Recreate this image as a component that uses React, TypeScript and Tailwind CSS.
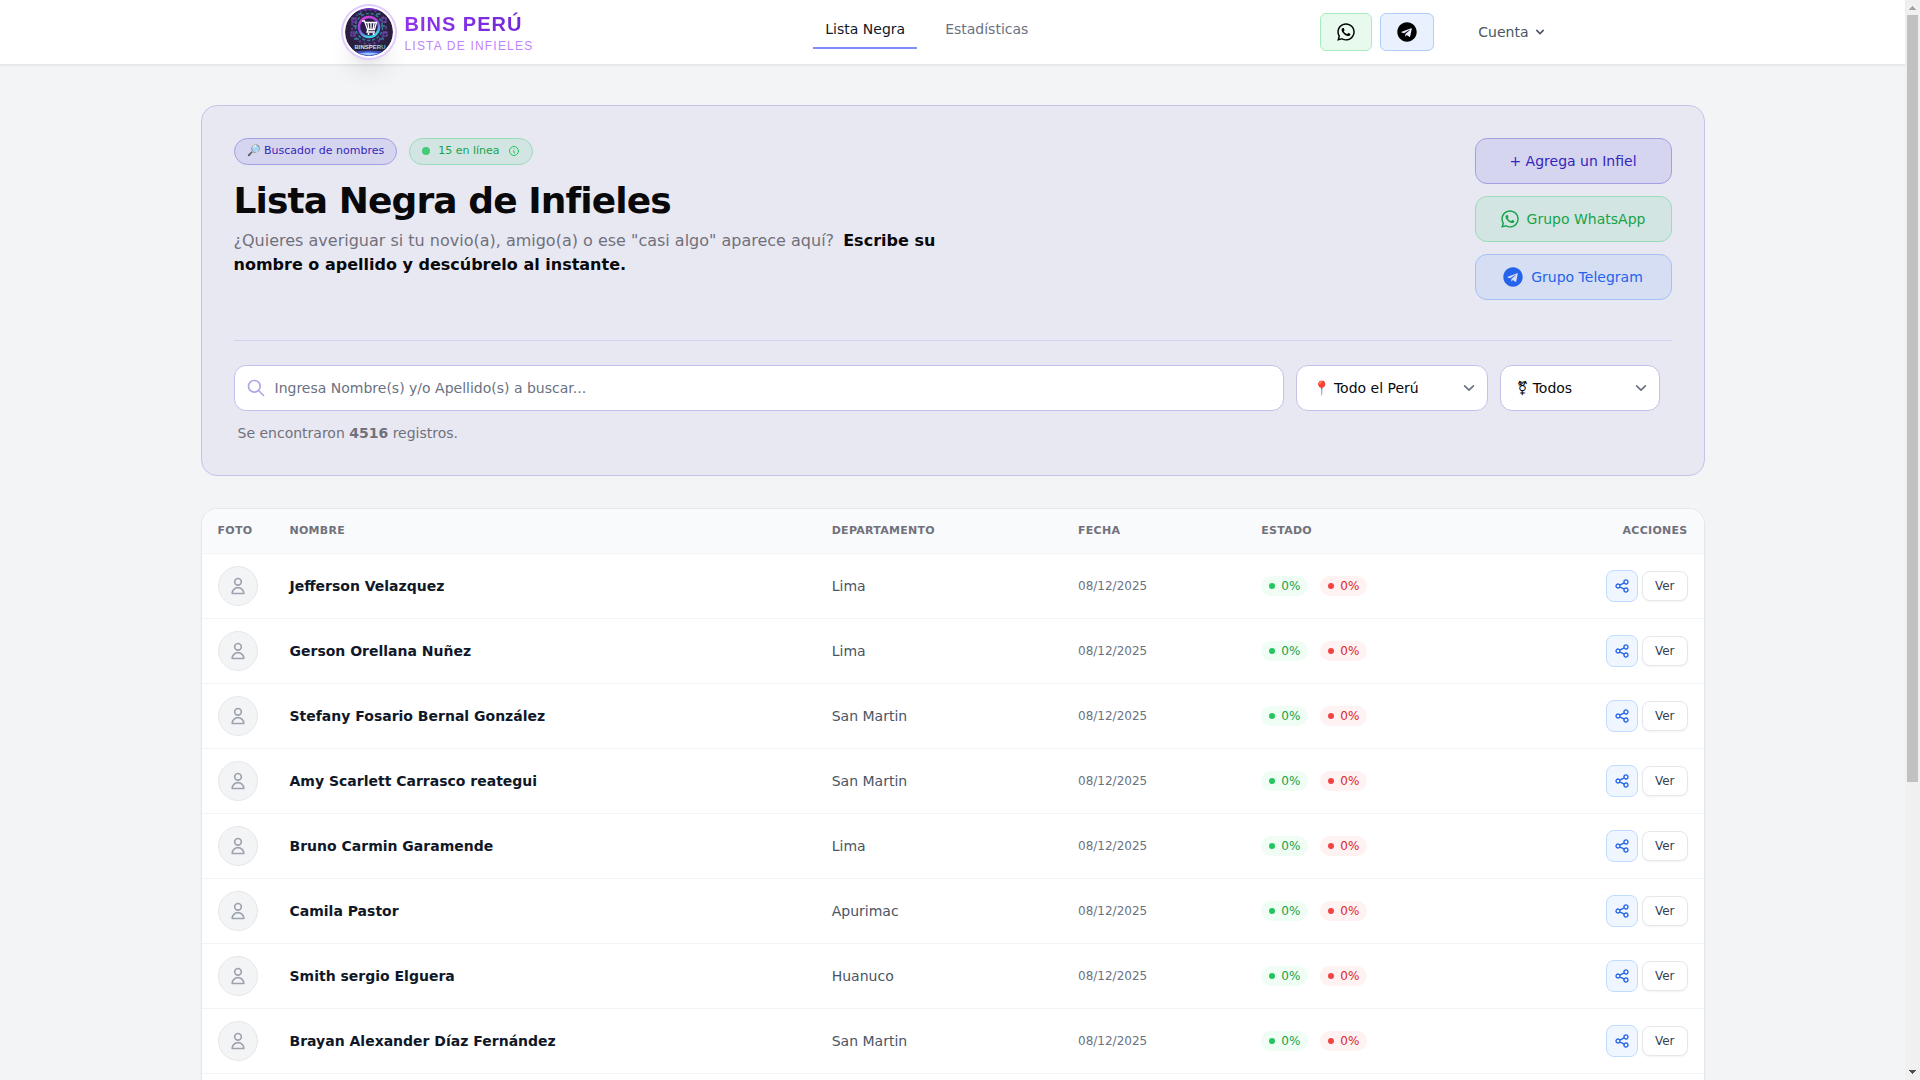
import clsx from "clsx";
import { FaTelegram, FaWhatsapp } from "react-icons/fa";

type Person = {
  name: string;
  department: string;
  date: string;
};

const PEOPLE: Person[] = [
  { name: "Jefferson Velazquez", department: "Lima", date: "08/12/2025" },
  { name: "Gerson Orellana Nuñez", department: "Lima", date: "08/12/2025" },
  { name: "Stefany Fosario Bernal González", department: "San Martin", date: "08/12/2025" },
  { name: "Amy Scarlett Carrasco reategui", department: "San Martin", date: "08/12/2025" },
  { name: "Bruno Carmin Garamende", department: "Lima", date: "08/12/2025" },
  { name: "Camila Pastor", department: "Apurimac", date: "08/12/2025" },
  { name: "Smith sergio Elguera", department: "Huanuco", date: "08/12/2025" },
  { name: "Brayan Alexander Díaz Fernández", department: "San Martin", date: "08/12/2025" },
];

function Logo() {
  return (
    <svg
      viewBox="0 0 48 48"
      className="size-12 rounded-full shadow-xl ring-2 ring-[#e0cbfb] ring-offset-2"
    >
      <defs>
        <radialGradient id="logo-bg" cx="50%" cy="45%" r="55%">
          <stop offset="0" stopColor="#3c2a63" />
          <stop offset="0.7" stopColor="#2b2040" />
          <stop offset="1" stopColor="#2a1d38" />
        </radialGradient>
        <linearGradient id="logo-ring" x1="0" y1="0" x2="0.4" y2="1">
          <stop offset="0" stopColor="#e23fd8" />
          <stop offset="0.55" stopColor="#8a4be0" />
          <stop offset="1" stopColor="#3fd0e6" />
        </linearGradient>
        <linearGradient id="logo-text" x1="0" y1="0" x2="1" y2="0">
          <stop offset="0" stopColor="#7df3e6" />
          <stop offset="0.5" stopColor="#d6f4ff" />
          <stop offset="1" stopColor="#59b4e8" />
        </linearGradient>
        <clipPath id="logo-clip">
          <circle cx="24" cy="24" r="24" />
        </clipPath>
      </defs>
      <g clipPath="url(#logo-clip)">
        <rect width="48" height="48" fill="url(#logo-bg)" />
        <path d="M10 4Q24-5 38 4Q24-1 10 4Z" fill="#7a35dc" />
        <circle cx="24" cy="19" r="17" fill="none" stroke="#5a3f93" strokeWidth="2" strokeDasharray="2 3" />
        <circle cx="24" cy="19" r="13.5" fill="none" stroke="#2d7d94" strokeWidth="1.5" strokeDasharray="3 2" />
        <circle cx="24" cy="19" r="10" fill="#2a1c48" stroke="url(#logo-ring)" strokeWidth="2.5" />
        <g stroke="#7c4cc4" strokeWidth="1" fill="none">
          <rect x="7" y="10" width="4" height="4" />
          <rect x="37" y="10" width="4" height="4" />
          <rect x="6" y="24" width="4" height="4" />
          <rect x="38" y="24" width="4" height="4" />
          <path d="M13 6h4M31 6h4M8 18h4M36 18h4M9 31h5M34 31h5" stroke="#3aa5b8" />
        </g>
        <path
          d="M17 13h2.500l3 8.500h7l2-7H20.500M23 15l.8 6M26 15v6M29 15l-.8 6M23 21.500l-1 2.500h8"
          fill="none"
          stroke="#fff"
          strokeWidth="1.3"
        />
        <circle cx="23.500" cy="26" r="1" fill="#fff" />
        <circle cx="28.500" cy="26" r="1" fill="#fff" />
        <path d="M6 44Q24 41 42 44L36 48H12Z" fill="#3d52c9" />
        <path d="M14 45.500Q24 43.500 34 45.500L24 47.500Z" fill="#9cc5ff" />
        <text
          x="25"
          y="41"
          textAnchor="middle"
          fontSize="6"
          fontWeight="700"
          fontFamily="Liberation Sans, sans-serif"
          fill="url(#logo-text)"
        >
          BINSPERU
        </text>
      </g>
    </svg>
  );
}

function ChevronDown({ className }: { className?: string }) {
  return (
    <svg viewBox="0 0 20 20" fill="none" stroke="currentColor" className={className} aria-hidden>
      <path d="M6 8l4 4 4-4" strokeWidth={1.5} strokeLinecap="round" strokeLinejoin="round" />
    </svg>
  );
}

function Header() {
  return (
    <header className="relative border-b border-gray-200 bg-white shadow-xs">
      <div className="mx-auto flex h-16 max-w-7xl items-center justify-between px-8">
        <a href="#" className="flex items-center gap-3">
          <Logo />
          <span className="flex flex-col pt-1 font-['Liberation_Sans',Arial,sans-serif]">
            <span className="bg-linear-to-r from-[#9333ea] to-[#6d28d9] bg-clip-text text-xl leading-6 font-bold tracking-wider text-transparent">
              BINS PERÚ
            </span>
            <span className="text-xs leading-5 tracking-widest text-[#c084fc]">LISTA DE INFIELES</span>
          </span>
        </a>

        <nav className="flex h-16 items-start gap-4 pt-2 text-sm">
          <a href="#" className="border-b-2 border-[#818cf8] px-3 pt-[11px] pb-2 text-gray-900">
            Lista Negra
          </a>
          <a href="#" className="px-3 pt-[11px] pb-2 text-gray-500">
            Estadísticas
          </a>
        </nav>

        <div className="flex items-center gap-8">
          <div className="flex gap-2">
            <a
              href="#"
              aria-label="WhatsApp"
              className="rounded-md border border-[#a9ebc1] bg-[#e8faee] px-4 py-2 text-black"
            >
              <FaWhatsapp className="h-5 w-[18px]" />
            </a>
            <a
              href="#"
              aria-label="Telegram"
              className="rounded-md border border-[#b0cdfb] bg-[#e9f0fe] px-4 py-2 text-black"
            >
              <FaTelegram className="size-5" />
            </a>
          </div>
          <button type="button" className="flex items-center gap-1 px-3 text-sm text-gray-600">
            Cuenta
            <svg viewBox="0 0 20 20" fill="currentColor" className="size-4" aria-hidden>
              <path
                fillRule="evenodd"
                clipRule="evenodd"
                d="M5.293 7.293a1 1 0 011.414 0L10 10.586l3.293-3.293a1 1 0 111.414 1.414l-4 4a1 1 0 01-1.414 0l-4-4a1 1 0 010-1.414z"
              />
            </svg>
          </button>
        </div>
      </div>
    </header>
  );
}

function SelectBox({ label, text, className }: { label: string; text: string; className: string }) {
  return (
    <div className={clsx("relative shrink-0", className)}>
      <select
        aria-label={label}
        className="h-[46px] w-full appearance-none rounded-xl border border-[#c3c0ed] bg-white pr-10 pl-4 text-sm text-zinc-950"
      >
        <option>{text}</option>
      </select>
      <ChevronDown className="pointer-events-none absolute top-3 right-2 size-[22px] text-gray-500" />
    </div>
  );
}

function Hero() {
  return (
    <section className="rounded-2xl border border-[#c6c3ea] bg-[#e8e8f3] p-8">
      <div className="flex items-start justify-between">
        <div>
          <div className="flex gap-3 text-[11px] leading-4">
            <span className="rounded-full border border-[#a0a0e2] bg-[#d5d5f0] px-3 pt-1 pb-[5px] text-[#3525b8]">
              🔎 Buscador de nombres
            </span>
            <span className="flex items-center rounded-full border border-[#9adbb8] bg-[#d2e5e2] px-3 pt-1 pb-[5px] text-[#16a34a]">
              <span className="mr-2 size-2 rounded-full bg-[#45cb78]" />
              15 en línea
              <svg
                viewBox="0 0 24 24"
                fill="none"
                stroke="currentColor"
                className="ml-2 size-3 text-[#22c55e]"
                aria-hidden
              >
                <path
                  strokeWidth={2}
                  strokeLinecap="round"
                  strokeLinejoin="round"
                  d="M13 16h-1v-4h-1m1-4h.01M21 12a9 9 0 11-18 0 9 9 0 0118 0z"
                />
              </svg>
            </span>
          </div>
          <h1 className="mt-4 text-4xl font-bold tracking-tight text-zinc-950">Lista Negra de Infieles</h1>
          <p className="mt-2 max-w-3xl text-base text-zinc-500">
            ¿Quieres averiguar si tu novio(a), amigo(a) o ese "casi algo" aparece aquí?{" "}
            <strong className="ml-1 font-semibold text-zinc-950">
              Escribe su nombre o apellido y descúbrelo al instante.
            </strong>
          </p>
        </div>

        <div className="flex w-[197px] flex-col gap-3 text-sm">
          <button
            type="button"
            className="rounded-xl border border-[#a0a0e2] bg-[#d5d5f0] py-3 text-[#3525b8]"
          >
            + Agrega un Infiel
          </button>
          <a
            href="#"
            className="flex items-center justify-center gap-2 rounded-xl border border-[#9adbb8] bg-[#d2e5e2] py-3 text-[#16a34a]"
          >
            <FaWhatsapp className="h-5 w-[18px]" />
            Grupo WhatsApp
          </a>
          <a
            href="#"
            className="flex items-center justify-center gap-2 rounded-xl border border-[#a3c1f3] bg-[#d5def3] py-3 text-[#2563eb]"
          >
            <FaTelegram className="size-5" />
            Grupo Telegram
          </a>
        </div>
      </div>

      <form className="mt-10 border-t border-[#d3d2f0] pt-6" onSubmit={(e) => e.preventDefault()}>
        <div className="flex gap-3 pr-3">
          <div className="relative flex-1">
            <svg
              viewBox="0 0 24 24"
              fill="none"
              stroke="currentColor"
              className="pointer-events-none absolute top-[13px] left-3 size-5 text-[#aaa8e6]"
              aria-hidden
            >
              <path
                strokeWidth={2}
                strokeLinecap="round"
                strokeLinejoin="round"
                d="M21 21l-6-6m2-5a7 7 0 11-14 0 7 7 0 0114 0z"
              />
            </svg>
            <input
              type="text"
              aria-label="Nombre o apellido"
              placeholder="Ingresa Nombre(s) y/o Apellido(s) a buscar..."
              className="h-[46px] w-full rounded-xl border border-[#c3c0ed] bg-white pr-4 pl-10 text-sm placeholder:text-gray-500"
            />
          </div>
          <SelectBox label="Departamento" text="📍 Todo el Perú" className="w-48" />
          <SelectBox label="Género" text="⚧ Todos" className="w-40" />
        </div>
        <p className="mt-3 px-1 text-sm text-zinc-500">
          Se encontraron <b>4516</b> registros.
        </p>
      </form>
    </section>
  );
}

function Row({ person }: { person: Person }) {
  return (
    <tr className="border-b border-gray-100">
      <td className="px-4 py-3">
        <div className="flex size-10 items-center justify-center rounded-full border border-gray-200 bg-gray-100 text-[#9ca3af]">
          <svg viewBox="0 0 24 24" fill="none" stroke="currentColor" className="size-5" aria-hidden>
            <path
              strokeWidth={2}
              strokeLinecap="round"
              strokeLinejoin="round"
              d="M16 7a4 4 0 11-8 0 4 4 0 018 0zM12 14a7 7 0 00-7 7h14a7 7 0 00-7-7z"
            />
          </svg>
        </div>
      </td>
      <td className="px-4 text-sm font-semibold text-gray-900">{person.name}</td>
      <td className="px-4 text-sm text-gray-600">{person.department}</td>
      <td className="px-4 text-xs text-gray-500">{person.date}</td>
      <td className="px-4">
        <div className="flex gap-3 text-xs">
          <span className="flex items-center gap-1.5 rounded-full bg-[#f0fdf4] px-2 py-0.5 text-[#16a34a]">
            <span className="size-1.5 rounded-full bg-[#22c55e]" />
            0%
          </span>
          <span className="flex items-center gap-1.5 rounded-full bg-[#fef2f2] px-2 py-0.5 text-[#dc2626]">
            <span className="size-1.5 rounded-full bg-[#ef4444]" />
            0%
          </span>
        </div>
      </td>
      <td className="px-4">
        <div className="flex items-center justify-end gap-1">
          <button
            type="button"
            aria-label="Compartir"
            className="flex size-8 items-center justify-center rounded-lg border border-[#bfdbfe] bg-[#eff6ff] text-[#2563eb]"
          >
            <svg viewBox="0 0 24 24" fill="none" stroke="currentColor" className="size-4" aria-hidden>
              <path
                strokeWidth={2}
                strokeLinecap="round"
                strokeLinejoin="round"
                d="M8.684 13.342C8.886 12.938 9 12.482 9 12c0-.482-.114-.938-.316-1.342m0 2.684a3 3 0 110-2.684m0 2.684l6.632 3.316m-6.632-6l6.632-3.316m0 0a3 3 0 105.367-2.684 3 3 0 00-5.367 2.684zm0 9.316a3 3 0 105.368 2.684 3 3 0 00-5.368-2.684z"
              />
            </svg>
          </button>
          <button
            type="button"
            className="rounded-lg border border-gray-200 bg-white px-3 py-1.5 text-xs text-gray-700 shadow-xs"
          >
            Ver
          </button>
        </div>
      </td>
    </tr>
  );
}

function PeopleTable() {
  return (
    <section className="mt-8 overflow-hidden rounded-2xl border border-gray-200 bg-white pb-16 shadow-xs">
      <table className="w-full table-fixed border-collapse text-left">
        <thead>
          <tr className="h-11 border-b border-gray-100 bg-gray-50 text-[11px] leading-4 tracking-wide text-zinc-500 uppercase">
            <th className="w-18 px-4 font-semibold">Foto</th>
            <th className="w-[36.1%] px-4 font-semibold">Nombre</th>
            <th className="w-[16.4%] px-4 font-semibold">Departamento</th>
            <th className="w-[12.2%] px-4 font-semibold">Fecha</th>
            <th className="px-4 font-semibold">Estado</th>
            <th className="px-4 text-right font-semibold">Acciones</th>
          </tr>
        </thead>
        <tbody>
          {PEOPLE.map((person) => (
            <Row key={person.name} person={person} />
          ))}
        </tbody>
      </table>
    </section>
  );
}

function ScrollBar() {
  return (
    <div className="flex w-[15px] shrink-0 flex-col items-center bg-[#f0f0f0]" aria-hidden>
      <svg viewBox="0 0 15 15" className="h-[15px] w-full" shapeRendering="crispEdges">
        <path d="M4 10h7L7.500 6z" fill="#a3a3a3" />
      </svg>
      <div className="w-[11px] basis-[71%] bg-[#c1c1c1]" />
      <svg viewBox="0 0 15 15" className="mt-auto h-[15px] w-full shrink-0" shapeRendering="crispEdges">
        <path d="M4 5h7L7.500 9z" fill="#505050" />
      </svg>
    </div>
  );
}

export default function App() {
  return (
    <div className="flex h-screen overflow-hidden bg-gray-100 font-['DejaVu_Sans',sans-serif] antialiased">
      <div className="min-w-0 flex-1">
        <Header />
        <main className="mx-auto max-w-screen-2xl px-4 pt-10">
          <Hero />
          <PeopleTable />
        </main>
      </div>
      <ScrollBar />
    </div>
  );
}
